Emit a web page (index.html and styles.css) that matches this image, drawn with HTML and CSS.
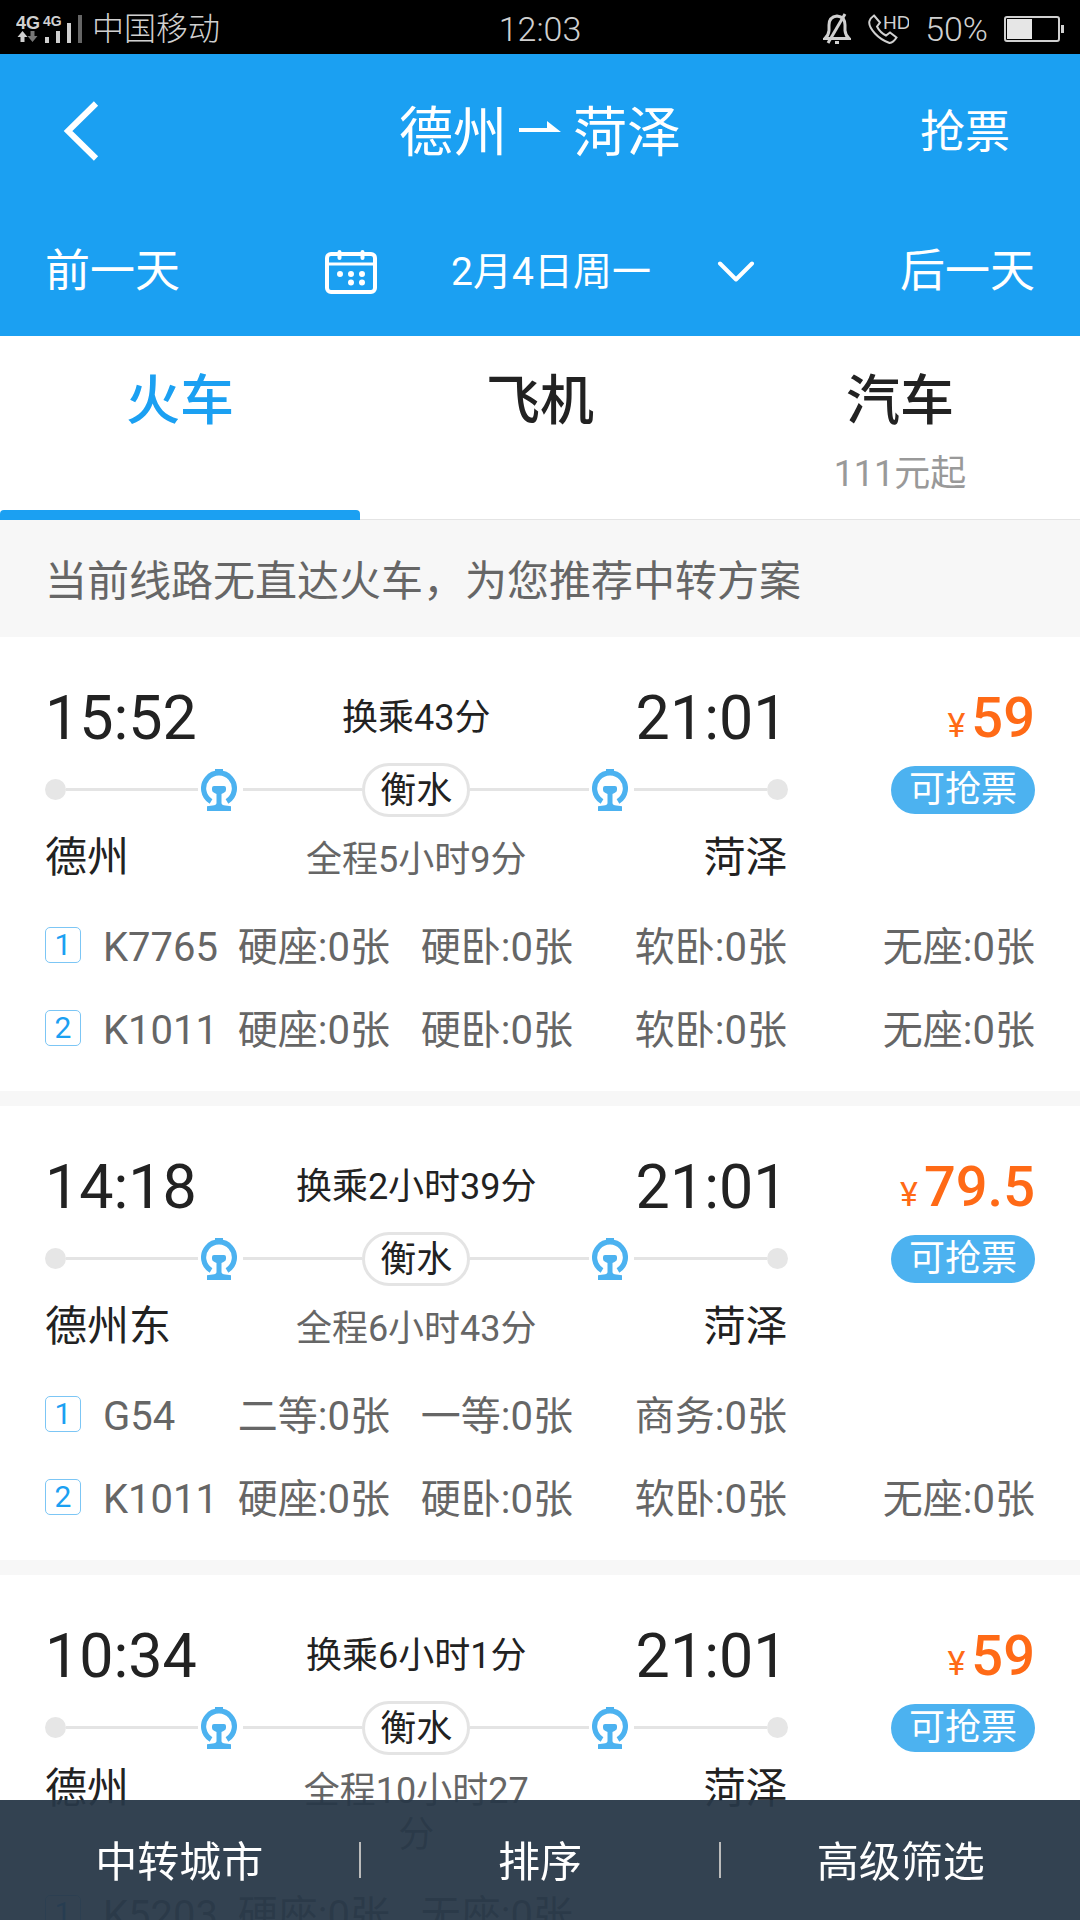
FILE: index.html
```html
<!DOCTYPE html>
<html lang="zh-CN">
  <head>
    <meta charset="UTF-8" />
    <meta name="viewport" content="width=device-width, initial-scale=1.0" />
    <title>德州 - 菏泽</title>
    <link rel="stylesheet" href="styles.css">
  </head>
  <body>
    <svg class="symbols" aria-hidden="true">
      <symbol id="train" viewBox="0 0 36 42">
        <path d="M14 0h8v4h-8z" fill="currentColor" />
        <path d="M10 32.500A15.400 15.400 0 1 1 26 32.500" fill="none" stroke="currentColor" stroke-width="5.2" />
        <path d="M13 17h10q2 0 2 2v2q0 2-2.500 3l-2 1v9q0 2 4 2.600l5.500.700v4.700H6v-4.700l5.500-.700q4-.600 4-2.600v-9l-2-1Q11 23 11 21v-2q0-2 2-2z" fill="currentColor" />
      </symbol>
    </svg>

    <div class="app">
      <div class="status">
        <div class="status-left">
          <svg width="68" height="30" viewBox="0 0 68 30" fill="#d0d0d0">
            <text x="0" y="15" class="net net-big">4G</text>
            <text x="27" y="12" class="net">4G</text>
            <path d="M6.500 17l5 6H8.500v5h-4v-5H1.500z" />
            <path d="M16.500 28l5-6h-3v-5h-4v5h-3z" fill="#777" />
            <rect x="29" y="23" width="4" height="6" />
            <rect x="40" y="17" width="4" height="12" />
            <rect x="51" y="9" width="4" height="20" />
            <rect x="62" y="1" width="4" height="28" fill="#666" />
          </svg>
          <span>中国移动</span>
        </div>
        <span class="clock">12:03</span>
        <div class="status-right">
          <svg width="28" height="32" viewBox="0 0 28 32" fill="none" stroke="#d0d0d0" stroke-width="3">
            <path d="M2 25.500h24q-3.500-3-4-8V12q0-8-8-9-8 1-8 9v5.500q-.5 5-4 8z" />
            <path d="M22 1L5 30" />
            <path d="M12 29.500h4" />
          </svg>
          <svg width="42" height="32" viewBox="0 0 42 32" fill="none" stroke="#d0d0d0" stroke-width="2">
            <path d="M7 2.500l6 7-3 4q3 6 9 9l4-3 6.500 5q-3 5-7 5.500Q14 27 8 20.500 1 13 2.500 8q1-3 4.500-5.500z" />
            <text x="16" y="16" class="hd">HD</text>
          </svg>
          <span>50%</span>
          <svg width="60" height="26" viewBox="0 0 60 26">
            <rect x="1" y="1" width="54" height="24" rx="2" fill="none" stroke="#d0d0d0" stroke-width="2" />
            <rect x="3" y="3" width="25" height="20" fill="#e6e6e6" />
            <rect x="57" y="9" width="3" height="8" fill="#d0d0d0" />
          </svg>
        </div>
      </div>

      <header class="header">
        <div class="title-bar">
          <button class="back" aria-label="返回">
            <svg width="38" height="60" viewBox="0 0 38 60" fill="none" stroke="#fff" stroke-width="6">
              <path d="M34 2.500L6 30l28 27.500" />
            </svg>
          </button>
          <h1>
            德州
            <svg width="42" height="22" viewBox="0 0 42 22" fill="#fff"><path d="M0 7h28V0l14 11H0z" /></svg>
            菏泽
          </h1>
          <button class="grab">抢票</button>
        </div>
        <div class="date-bar">
          <button>前一天</button>
          <button class="date">
            <svg width="52" height="46" viewBox="0 0 52 46" fill="none" stroke="#fff">
              <rect x="2" y="5" width="48" height="38" rx="4" stroke-width="4" />
              <path d="M2 15h48" stroke-width="3" />
              <path d="M14.500 3v6M37.500 3v6" stroke-width="4" stroke-linecap="round" />
              <path d="M15 25h0M26 25h0M37 25h0M26 33.500h0M37 33.500h0" stroke-width="6" stroke-linecap="round" />
            </svg>
            <span>2月4日周一</span>
            <svg width="38" height="22" viewBox="0 0 38 22" fill="none" stroke="#fff" stroke-width="4" stroke-linecap="round" stroke-linejoin="round">
              <path d="M3 2.500l16 16 16-16" />
            </svg>
          </button>
          <button>后一天</button>
        </div>
      </header>

      <nav class="tabs">
        <a href="#train-list" class="active">火车</a>
        <a href="#plane">飞机</a>
        <a href="#bus">汽车<small>111元起</small></a>
      </nav>

      <p class="notice">当前线路无直达火车，为您推荐中转方案</p>

      <main class="list" id="train-list">
        <section class="card">
          <div class="trip">
            <div class="times">
              <strong>15:52</strong>
              <span>换乘43分</span>
              <strong>21:01</strong>
            </div>
            <div class="route">
              <i class="dot"></i><i class="line outer"></i>
              <svg class="train"><use href="#train" /></svg>
              <i class="line"></i><span class="via">衡水</span><i class="line"></i>
              <svg class="train"><use href="#train" /></svg>
              <i class="line outer"></i><i class="dot"></i>
            </div>
            <div class="stations">
              <b>德州</b>
              <span>全程5小时9分</span>
              <b>菏泽</b>
            </div>
          </div>
          <div class="price">
            <p><small>¥</small>59</p>
            <button>可抢票</button>
          </div>
          <ul class="seats">
            <li><i>1</i><span>K7765</span><span>硬座:0张</span><span>硬卧:0张</span><span>软卧:0张</span><span>无座:0张</span></li>
            <li><i>2</i><span>K1011</span><span>硬座:0张</span><span>硬卧:0张</span><span>软卧:0张</span><span>无座:0张</span></li>
          </ul>
        </section>

        <section class="card">
          <div class="trip">
            <div class="times">
              <strong>14:18</strong>
              <span>换乘2小时39分</span>
              <strong>21:01</strong>
            </div>
            <div class="route">
              <i class="dot"></i><i class="line outer"></i>
              <svg class="train"><use href="#train" /></svg>
              <i class="line"></i><span class="via">衡水</span><i class="line"></i>
              <svg class="train"><use href="#train" /></svg>
              <i class="line outer"></i><i class="dot"></i>
            </div>
            <div class="stations">
              <b>德州东</b>
              <span>全程6小时43分</span>
              <b>菏泽</b>
            </div>
          </div>
          <div class="price">
            <p><small>¥</small>79.5</p>
            <button>可抢票</button>
          </div>
          <ul class="seats">
            <li><i>1</i><span>G54</span><span>二等:0张</span><span>一等:0张</span><span>商务:0张</span></li>
            <li><i>2</i><span>K1011</span><span>硬座:0张</span><span>硬卧:0张</span><span>软卧:0张</span><span>无座:0张</span></li>
          </ul>
        </section>

        <section class="card">
          <div class="trip">
            <div class="times">
              <strong>10:34</strong>
              <span>换乘6小时1分</span>
              <strong>21:01</strong>
            </div>
            <div class="route">
              <i class="dot"></i><i class="line outer"></i>
              <svg class="train"><use href="#train" /></svg>
              <i class="line"></i><span class="via">衡水</span><i class="line"></i>
              <svg class="train"><use href="#train" /></svg>
              <i class="line outer"></i><i class="dot"></i>
            </div>
            <div class="stations">
              <b>德州</b>
              <span>全程10小时27分</span>
              <b>菏泽</b>
            </div>
          </div>
          <div class="price">
            <p><small>¥</small>59</p>
            <button>可抢票</button>
          </div>
          <ul class="seats">
            <li><i>1</i><span>K5203</span><span>硬座:0张</span><span>无座:0张</span></li>
          </ul>
        </section>
      </main>

      <footer class="filter-bar">
        <button>中转城市</button>
        <button>排序</button>
        <button>高级筛选</button>
      </footer>
    </div>
  </body>
</html>
```

FILE: styles.css
```css
* {
  box-sizing: border-box;
  margin: 0;
  padding: 0;
}

body {
  font-family: Roboto, "Noto Sans CJK SC", sans-serif;
  line-height: 1.2;
  color: #222;
  background-color: #fff;
}

button {
  font: inherit;
  color: inherit;
  background: none;
  border: none;
  cursor: pointer;
}

a {
  color: inherit;
  text-decoration: none;
}

i,
b,
strong {
  font-style: normal;
  font-weight: inherit;
}

ul {
  list-style: none;
}

svg {
  flex: none;
}

.symbols {
  display: none;
}

.app {
  display: flex;
  flex-direction: column;
  height: 100vh;
  overflow: hidden;
}

/* Status bar */
.status {
  display: grid;
  grid-template-columns: 1fr auto 1fr;
  align-items: center;
  flex: none;
  height: 54px;
  padding: 0 16px;
  font-size: 32px;
  font-weight: 300;
  line-height: 58px;
  color: #d0d0d0;
  background-color: #000;
}

.clock {
  font-size: 34px;
}

.status-left,
.status-right {
  display: flex;
  align-items: center;
}

.status-left {
  gap: 8px;
}

.status-right {
  justify-content: flex-end;
  gap: 16px;
}

.status-right span {
  font-size: 34px;
}

.net {
  font: bold 14px "Liberation Sans", sans-serif;
}

.net-big {
  font-size: 18px;
}

.hd {
  font: 19px "Liberation Sans", sans-serif;
  fill: #d0d0d0;
  stroke: none;
}

/* Header */
.header {
  flex: none;
  color: #fff;
  background-color: #1ba0f2;
}

.title-bar {
  display: grid;
  grid-template-columns: 1fr auto 1fr;
  align-items: center;
  height: 154px;
  padding: 0 70px;
  font-size: 45px;
}

.title-bar h1 {
  display: flex;
  align-items: center;
  gap: 12px;
  padding-top: 6px;
  font-size: 54px;
  font-weight: inherit;
}

.title-bar h1 svg {
  margin-bottom: 4px;
}

.back {
  justify-self: start;
  display: flex;
  margin-left: -8px;
}

.grab {
  justify-self: end;
  padding-top: 4px;
}

.date-bar {
  display: flex;
  justify-content: space-between;
  align-items: center;
  height: 126px;
  margin-bottom: 2px;
  padding: 0 45px;
  font-size: 45px;
}

.date-bar button {
  padding-top: 2px;
}

.date {
  display: flex;
  align-items: center;
  width: 430px;
  font-size: 39px;
}

.date span {
  flex: 1;
  padding-left: 8px;
}

/* Tabs */
.tabs {
  display: flex;
  flex: none;
  height: 184px;
  border-bottom: 1px solid #e4e4e4;
}

.tabs a {
  flex: 1;
  position: relative;
  padding-top: 26px;
  font-size: 54px;
  font-weight: 500;
  line-height: 80px;
  text-align: center;
}

.tabs .active {
  color: #1ba0f2;
}

.tabs .active::after {
  content: "";
  position: absolute;
  left: 0;
  right: 0;
  bottom: -1px;
  height: 10px;
  border-radius: 4px 4px 0 0;
  background-color: #1ba0f2;
}

.tabs small {
  display: block;
  font-size: 36px;
  font-weight: 400;
  line-height: 64px;
  color: #999;
}

.notice {
  flex: none;
  padding: 6px 45px 0;
  font-size: 42px;
  line-height: 111px;
  color: #666;
  background-color: #f7f7f7;
}

/* Trips */
.list {
  flex: 1;
  min-height: 0;
  overflow-y: auto;
  scrollbar-width: none;
  background-color: #f7f7f7;
}

.card {
  display: grid;
  grid-template-columns: 3fr 1fr;
  padding: 49px 45px 19px;
  margin-bottom: 15px;
  background-color: #fff;
}

.times,
.stations {
  display: grid;
  grid-template-columns: 1fr 250px 1fr;
  font-size: 36px;
  text-align: center;
}

.times {
  align-items: center;
  line-height: 64px;
}

.times strong {
  font-size: 61px;
}

.times > :first-child,
.stations > :first-child {
  text-align: left;
}

.times > :last-child,
.stations > :last-child {
  text-align: right;
}

.route {
  display: flex;
  align-items: center;
  height: 79px;
}

.dot {
  width: 21px;
  height: 21px;
  border-radius: 50%;
  background-color: #e6e6e6;
}

.line {
  flex: 9;
  height: 3px;
  background-color: #e4e4e4;
}

.outer {
  flex: 10;
}

.train {
  width: 36px;
  height: 42px;
  margin: 0 6px 0 3px;
  color: #4cb2f0;
}

.via {
  padding: 2px 15px 0;
  border: 3px solid #e4e4e4;
  border-radius: 27px;
  font-size: 36px;
  line-height: 46px;
}

.stations {
  align-items: baseline;
  align-content: center;
  min-height: 60px;
  line-height: 44px;
}

.stations b {
  font-size: 42px;
}

.stations span {
  color: #666;
}

.price {
  display: flex;
  flex-direction: column;
  align-items: flex-end;
  gap: 16px;
}

.price p {
  font-size: 56px;
  font-weight: 500;
  line-height: 64px;
  color: #ff6a16;
}

.price small {
  margin-right: 6px;
  font-size: 34px;
  font-weight: 400;
  line-height: 36px;
}

.price button {
  padding: 0 18px;
  border-radius: 24px;
  font-size: 36px;
  line-height: 48px;
  color: #fff;
  background-color: #4cb2f0;
}

.seats {
  grid-column: 1 / -1;
  padding-top: 17px;
  font-size: 40px;
  line-height: 83px;
  color: #666;
}

.seats li {
  display: grid;
  grid-template-columns: 58px 134px 153px 183px 1fr 248px;
  align-items: center;
  text-align: right;
}

.seats span:nth-child(2) {
  text-align: left;
}

.seats i {
  width: 36px;
  margin-bottom: 6px;
  border: 1px solid #7cc6f5;
  border-radius: 5px;
  font-size: 30px;
  line-height: 34px;
  text-align: center;
  color: #1ba0f2;
}

/* Bottom bar */
.filter-bar {
  position: fixed;
  left: 0;
  right: 0;
  bottom: 0;
  display: flex;
  align-items: center;
  height: 120px;
  font-size: 42px;
  line-height: 30px;
  color: #fff;
  background-color: rgba(40, 56, 72, 0.95);
}

.filter-bar button {
  flex: 1;
  padding-top: 6px;
}

.filter-bar button + button {
  border-left: 2px solid #bbb;
}
```
